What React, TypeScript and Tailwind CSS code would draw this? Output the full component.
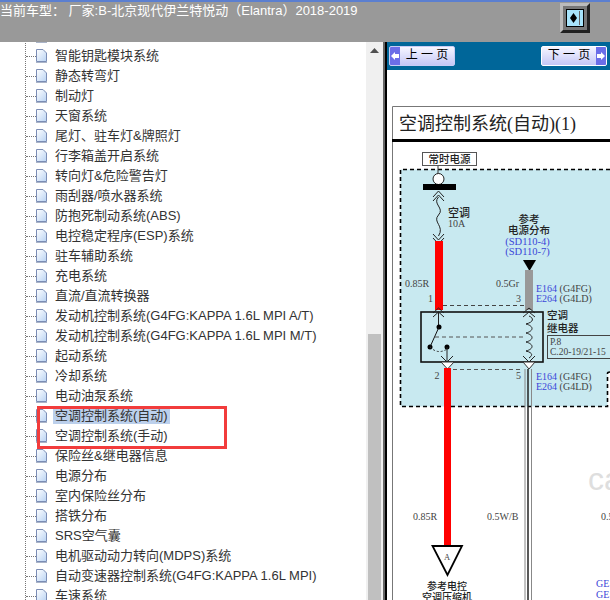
const FONT = "font-['Liberation_Sans','Noto_Sans_CJK_SC',sans-serif]";

const systems = [
  "智能钥匙模块系统",
  "静态转弯灯",
  "制动灯",
  "天窗系统",
  "尾灯、驻车灯&牌照灯",
  "行李箱盖开启系统",
  "转向灯&危险警告灯",
  "雨刮器/喷水器系统",
  "防抱死制动系统(ABS)",
  "电控稳定程序(ESP)系统",
  "驻车辅助系统",
  "充电系统",
  "直流/直流转换器",
  "发动机控制系统(G4FG:KAPPA 1.6L MPI A/T)",
  "发动机控制系统(G4FG:KAPPA 1.6L MPI M/T)",
  "起动系统",
  "冷却系统",
  "电动油泵系统",
  "空调控制系统(自动)",
  "空调控制系统(手动)",
  "保险丝&继电器信息",
  "电源分布",
  "室内保险丝分布",
  "搭铁分布",
  "SRS空气囊",
  "电机驱动动力转向(MDPS)系统",
  "自动变速器控制系统(G4FG:KAPPA 1.6L MPI)",
  "车速系统",
];

function DocIcon() {
  return (
    <svg width="11" height="14" viewBox="0 0 11 14" className="shrink-0">
      <defs>
        <linearGradient id="doc" x1="0" y1="0" x2="1" y2="1">
          <stop offset="0" stopColor="#ffffff" />
          <stop offset="1" stopColor="#b9d3f3" />
        </linearGradient>
      </defs>
      <path d="M.5 .5H7L10.500 4V12.500H.5Z" fill="url(#doc)" stroke="#7b8db5" />
      <path d="M0 13.500H11" stroke="#aab4c8" />
    </svg>
  );
}

function TreeRow({ label }: { label: string }) {
  return (
    <div className="flex h-5 items-center">
      <div className="w-[10px] border-t border-dotted border-[#777]" />
      <DocIcon />
      <span
        className={`ml-[6px] px-[2px] text-[13px] leading-4 whitespace-nowrap text-[#333] ${
          label === "空调控制系统(自动)" ? "bg-[#bcd0ec]" : ""
        }`}
      >
        {label}
      </span>
    </div>
  );
}

function PageButton({ label, dir }: { label: string; dir: "prev" | "next" }) {
  const cap = (
    <div className="flex w-[10px] items-center justify-center self-stretch bg-[#6b6ee8]">
      <svg width="8" height="8" viewBox="0 0 8 8">
        <path d={dir === "prev" ? "M0 4L4 0V2H8V6H4V8Z" : "M8 4L4 0V2H0V6H4V8Z"} fill="#fff" />
      </svg>
    </div>
  );
  return (
    <div
      className={`flex h-[20px] w-[66px] overflow-hidden rounded-[2px] border bg-gradient-to-b from-[#f6f6ff] to-[#c5c7f6] ${
        dir === "next" ? "border-white" : "border-[#c9ccf5]"
      }`}
    >
      {dir === "prev" && cap}
      <span className="flex-1 text-center text-[12px] leading-[17px] text-black">
        {label}
      </span>
      {dir === "next" && cap}
    </div>
  );
}

function Diagram() {
  const serif = "'Liberation Serif','Noto Sans CJK SC',serif";
  const cjk = "'Noto Sans CJK SC',sans-serif";
  const blue = "#3b46d8";
  const grey = "#444";
  return (
    <svg viewBox="387 70 223 530" className="block h-[530px] w-[223px]">
      {/* page frame */}
      <path d="M392.500 600V106.500H610" fill="none" stroke="#777" />
      <rect x="392" y="139" width="218" height="3" fill="#000" />
      <text x="399" y="130" fontSize="18" fontFamily={serif} fill="#222">空调控制系统(自动)(1)</text>

      {/* dashed zone */}
      <path d="M400.500 169.500H610V372H607.500V406.500H400.500Z" fill="#c8e9f0" />
      <path
        d="M610 169.500H400.500V406.500H607.500V373.500Q607.500 372 610 372"
        fill="none"
        stroke="#000"
        strokeWidth="1.600"
        strokeDasharray="4 3"
      />

      <rect x="422.500" y="152.500" width="54" height="13" fill="#fff" stroke="#555" />
      <text x="449.500" y="163" fontSize="10.500" textAnchor="middle" fontFamily={cjk} fontWeight="500" fill="#222">常时电源</text>

      {/* fuse */}
      <path d="M438 166V174" stroke="#333" />
      <circle cx="438.500" cy="179" r="5.500" fill="#fff" stroke="#222" />
      <rect x="423" y="184" width="33" height="6" fill="#000" />
      <path d="M433 197L438.500 191L444 197M433 201L438.500 195L444 201" fill="none" stroke="#222" />
      <path d="M438.500 197C432 204 445 208 438.500 215C432 222 445 226 438.500 236" fill="none" stroke="#222" />
      <path d="M433 234L438.500 240L444 234M433 238L438.500 244L444 238" fill="none" stroke="#222" />
      <text x="448" y="217" fontSize="11" fontFamily={cjk} fontWeight="500" fill="#222">空调</text>
      <text x="448" y="227" fontSize="10" fontFamily={serif} fill={grey}>10A</text>

      {/* reference block */}
      <text x="529" y="223" fontSize="10.500" textAnchor="middle" fontFamily={cjk} fontWeight="500" fill="#222">参考</text>
      <text x="529" y="234" fontSize="10.500" textAnchor="middle" fontFamily={cjk} fontWeight="500" fill="#222">电源分布</text>
      <text x="527.500" y="244.500" fontSize="10.500" textAnchor="middle" fontFamily={serif} fill={blue}>(SD110-4)</text>
      <text x="527.500" y="254.500" fontSize="10.500" textAnchor="middle" fontFamily={serif} fill={blue}>(SD110-7)</text>
      <path d="M523 260H536L529.500 271Z" fill="#000" />

      {/* wires above relay */}
      <rect x="435" y="241" width="8" height="69" fill="#ff0000" />
      <rect x="525" y="270" width="8" height="40" fill="#999" />
      <text x="405" y="287" fontSize="10" fontFamily={serif} fill={grey}>0.85R</text>
      <text x="496" y="287" fontSize="10" fontFamily={serif} fill={grey}>0.5Gr</text>
      <text x="536" y="292" fontSize="10" fontFamily={serif} fill={grey}><tspan fill={blue}>E164</tspan> (G4FG)</text>
      <text x="536" y="302" fontSize="10" fontFamily={serif} fill={grey}><tspan fill={blue}>E264</tspan> (G4LD)</text>
      <text x="428" y="302" fontSize="10" fontFamily={serif} fill={grey}>1</text>
      <text x="516" y="302" fontSize="10" fontFamily={serif} fill={grey}>3</text>
      <path d="M443 305.500H525" stroke="#444" strokeDasharray="4 3" />

      {/* relay */}
      <rect x="421" y="312" width="122" height="50" fill="none" stroke="#111" strokeWidth="1.600" />
      <path d="M433 313L438.500 308L444 313M433 317L438.500 312L444 317M438.500 312V327" fill="none" stroke="#222" />
      <path d="M523 313L529 308L535 313M523 317L529 312L535 317" fill="none" stroke="#222" />
      <circle cx="439" cy="327" r="2.500" fill="#000" />
      <circle cx="430" cy="347" r="2.500" fill="#000" />
      <circle cx="447" cy="347" r="2.500" fill="#000" />
      <path d="M439 327L430 347" stroke="#111" />
      <path d="M430 347Q438 355 447 349" fill="none" stroke="#333" strokeDasharray="2 2" />
      <path d="M447 347V362M441 356L447 362L453 356" fill="none" stroke="#222" />
      <path d="M435 337H524" stroke="#555" strokeDasharray="4 3" />
      <path d="M529 316C534 318 534 322 526 324C534 326 534 331 526 333C534 335 534 340 526 342C534 344 534 349 526 351C534 353 532 356 529 358" fill="none" stroke="#222" />
      <path d="M523 356L529 362L535 356" fill="none" stroke="#222" />
      <text x="547" y="319" fontSize="10.500" fontFamily={cjk} fontWeight="500" fill="#222">空调</text>
      <text x="547" y="332" fontSize="10.500" fontFamily={cjk} fontWeight="500" fill="#222">继电器</text>
      <rect x="547.500" y="335.500" width="70" height="23" fill="none" stroke="#444" />
      <text x="550" y="345" fontSize="9.500" fontFamily={serif} fill={grey}>P.8</text>
      <text x="550" y="355" fontSize="9.500" fontFamily={serif} fill={grey}>C.20-19/21-15</text>

      {/* wires below relay */}
      <path d="M441 362L447.500 369L454 362Z" fill="#fff" stroke="#333" />
      <path d="M523 362L529 369L535 362Z" fill="#fff" stroke="#333" />
      <rect x="444" y="368" width="7" height="178" fill="#ff0000" />
      <path d="M453 369.500H522" stroke="#555" strokeDasharray="4 3" />
      <text x="437" y="379" fontSize="10" textAnchor="middle" fontFamily={serif} fill={grey}>2</text>
      <text x="516" y="379" fontSize="10" fontFamily={serif} fill={grey}>5</text>
      <text x="536" y="380" fontSize="10" fontFamily={serif} fill={grey}><tspan fill={blue}>E164</tspan> (G4FG)</text>
      <text x="536" y="390" fontSize="10" fontFamily={serif} fill={grey}><tspan fill={blue}>E264</tspan> (G4LD)</text>
      <path d="M525 369V600M531.500 369V600" stroke="#888" />
      <path d="M528 369V600" stroke="#222" strokeWidth="1.500" />

      <text x="413" y="520" fontSize="10" fontFamily={serif} fill={grey}>0.85R</text>
      <text x="487" y="520" fontSize="10" fontFamily={serif} fill={grey}>0.5W/B</text>
      <text x="601" y="520" fontSize="10" fontFamily={serif} fill={grey}>0.5</text>
      <text x="588" y="490" fontSize="32" fontFamily="'Liberation Sans',sans-serif" fill="#dedede">ca</text>

      {/* connector */}
      <path d="M432.500 546H462L447.500 575Z" fill="#fff" stroke="#000" strokeWidth="1.800" />
      <text x="447" y="560" fontSize="8.500" textAnchor="middle" fontFamily={serif} fill={grey}>A</text>
      <text x="447" y="590" fontSize="10" textAnchor="middle" fontFamily={cjk} fontWeight="500" fill="#222">参考电控</text>
      <text x="447" y="601" fontSize="10" textAnchor="middle" fontFamily={cjk} fontWeight="500" fill="#222">空调压缩机</text>
      <text x="596" y="587" fontSize="10" fontFamily={serif} fill={blue}>GE</text>
      <text x="596" y="598" fontSize="10" fontFamily={serif} fill={blue}>GE</text>
    </svg>
  );
}

export default function App() {
  return (
    <div className={`relative flex h-[600px] w-[610px] flex-col overflow-hidden bg-white ${FONT}`}>
      <div className="flex h-[42px] shrink-0 justify-between border-t-2 border-[#5b7fd0] bg-[#999999] pr-[20px]">
        <div className="text-[13px] leading-[18px] whitespace-nowrap text-white">
          当前车型： 厂家:B-北京现代伊兰特悦动（Elantra）2018-2019
        </div>
        <div className="mt-[1px] flex h-[30px] w-[30px] items-center justify-center border-[3px] border-t-[#bbbbbb] border-r-[#222] border-b-[#222] border-l-[#bbbbbb] bg-[#777]">
          <div className="flex h-[18px] w-[18px] items-center justify-end gap-[2px] border border-black bg-[#a8e4fb] pr-[3px]">
            <svg width="7" height="10" viewBox="0 0 7 10">
              <path d="M3.500 0L7 5L3.500 10L0 5Z" fill="#000" />
            </svg>
            <div className="h-[14px] w-px bg-[#666]" />
          </div>
        </div>
      </div>

      <div className="flex min-h-0 flex-1">
        <div className="flex w-[366px] shrink-0 flex-col overflow-hidden pl-[25px]">
          <div className="-mt-[16px] border-l border-dotted border-[#777]">
            <TreeRow label="" />
            {systems.map((s) => (
              <TreeRow key={s} label={s} />
            ))}
          </div>
        </div>

        <div className="flex w-[17px] shrink-0 flex-col items-center bg-[#f0f0f0] px-[2px] pt-[5px]">
          <svg width="9" height="5" viewBox="0 0 9 5" className="mt-[1px]">
            <path d="M4.500 0L9 5H0Z" fill="#505050" />
          </svg>
          <div className="mt-[281px] w-full flex-1 bg-[#c0c0c0]" />
        </div>

        <div className="w-[2px] shrink-0 bg-[#666]" />
        <div className="w-[2px] shrink-0 bg-black" />

        <div className="flex min-w-0 flex-1 flex-col">
          <div className="flex h-[28px] shrink-0 items-center justify-between bg-[#006699] pr-[3px] pl-[2px]">
            <PageButton label="上 一 页" dir="prev" />
            <PageButton label="下 一 页" dir="next" />
          </div>
          <Diagram />
        </div>
      </div>

      <div className="absolute top-[406px] left-[37px] h-[43px] w-[190px] border-[3px] border-[#f23c3c]" />
    </div>
  );
}
